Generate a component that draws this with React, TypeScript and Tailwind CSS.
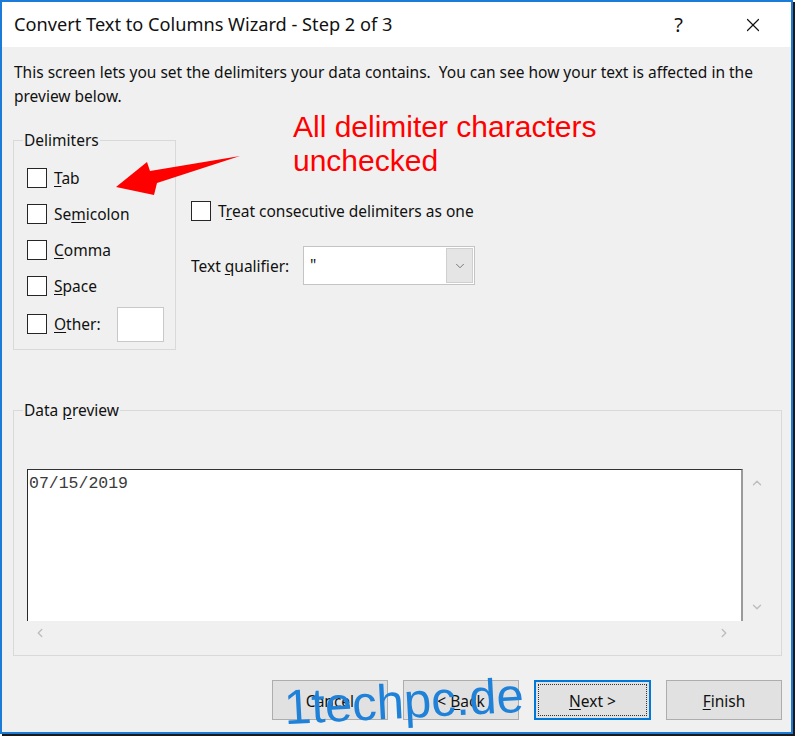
import { ChevronDown, ChevronLeft, ChevronRight, ChevronUp, X } from "lucide-react";

const ui = { fontFamily: '"Noto Sans", "Open Sans", sans-serif' };

function Box() {
  return <span className="h-[20px] w-[20px] shrink-0 border-[1.5px] border-[#262626] bg-white" />;
}

function Check({ pre, u, post }: { pre: string; u: string; post: string }) {
  return (
    <div className="flex h-[36px] items-center gap-[7px]">
      <Box />
      <span className="pt-[2px]">
        {pre}
        <span className="underline underline-offset-2">{u}</span>
        {post}
      </span>
    </div>
  );
}

function Btn({ pre, u, post, focus }: { pre: string; u: string; post: string; focus?: boolean }) {
  return (
    <div
      className={
        focus
          ? "flex h-[40px] w-[117px] items-center justify-center border-2 border-[#0078d7] bg-[#e1e1e1] p-[2px]"
          : "flex h-[40px] w-[116px] items-center justify-center border border-[#adadad] bg-[#e1e1e1]"
      }
    >
      <div
        className={
          focus
            ? "flex h-full w-full items-center justify-center border border-dotted border-[#333]"
            : "flex items-center justify-center"
        }
      >
        <span className="whitespace-pre pt-[3px]">
          {pre}
          {u && <span className="underline underline-offset-2">{u}</span>}
          {post}
        </span>
      </div>
    </div>
  );
}

export default function App() {
  return (
    <div className="h-[737px] w-[796px] bg-white" style={ui}>
      <div className="relative flex h-[734px] w-[793px] flex-col border-2 border-[#1c7bd6] text-[15.5px] text-[#111] shadow-[2px_2px_0_#1a1a1a]">
        {/* title bar */}
        <div className="flex h-[45px] shrink-0 items-center bg-white pl-[12px]">
          <span className="text-[18.2px] text-[#111]">Convert Text to Columns Wizard - Step 2 of 3</span>
          <span className="ml-auto mr-[59px] text-[20px]">?</span>
          <X className="mr-[27px] h-[22px] w-[22px]" strokeWidth={1.3} />
        </div>

        {/* body */}
        <div className="flex flex-1 flex-col bg-[#f0f0f0] pl-[11px] pr-[9px] pt-[13px]">
          <p className="whitespace-nowrap pl-[1px] leading-[24px]">
            This screen lets you set the delimiters your data contains.&nbsp; You can see how your text is affected in the
            <br />
            preview below.
          </p>

          <div className="mt-[22px] flex">
            <fieldset className="w-[163px] border border-[#d9d9d9] pb-[7px] pl-[9px]">
              <legend className="px-[1px] leading-[20px]">Delimiters</legend>
              <div className="mt-[10px] pl-[4px]">
                <Check pre="" u="T" post="ab" />
                <Check pre="Se" u="m" post="icolon" />
                <Check pre="" u="C" post="omma" />
                <Check pre="" u="S" post="pace" />
                <div className="mt-[2px] flex h-[36px] items-center">
                  <Box />
                  <span className="ml-[7px] pt-[2px]">
                    <span className="underline underline-offset-2">O</span>ther:
                  </span>
                  <span className="ml-[16px] h-[35px] w-[47px] border border-[#c8c8c8] bg-white" />
                </div>
              </div>
            </fieldset>

            <div className="ml-[15px] pt-[71px]">
              <div className="flex h-[20px] items-center gap-[7px]">
                <Box />
                <span className="pt-[2px]">
                  T<span className="underline underline-offset-2">r</span>eat consecutive delimiters as one
                </span>
              </div>
              <div className="mt-[25px] flex items-center">
                <span className="w-[112px] pt-[2px]">
                  Text <span className="underline underline-offset-2">q</span>ualifier:
                </span>
                <div className="flex h-[39px] w-[172px] items-center border border-[#c4c4c4] bg-white pl-[6px]">
                  <span>"</span>
                  <div className="ml-auto mr-[1px] flex h-[35px] w-[27px] items-center justify-center border border-[#cfcfcf] bg-[#e5e5e5]">
                    <ChevronDown className="h-[14px] w-[14px] text-[#555]" strokeWidth={1.3} />
                  </div>
                </div>
              </div>
            </div>
          </div>

          <fieldset className="mt-[50px] w-[769px] border border-[#d9d9d9] pb-[10px] pl-[9px]">
            <legend className="px-[1px] leading-[20px]">
              Data <span className="underline underline-offset-2">p</span>review
            </legend>
            <div className="mt-[49px] flex pl-[4px]">
              <div className="h-[152px] w-[716px] border-l border-r-2 border-t border-l-[#2a2a2a] border-r-[#9a9a9a] border-t-[#333] bg-white pl-[1px] pt-[1px]">
                <span className="text-[16.5px] text-[#3a3a3a]" style={{ fontFamily: '"Liberation Mono", monospace' }}>
                  07/15/2019
                </span>
              </div>
              <div className="flex w-[27px] flex-col items-center justify-between py-[7px]">
                <ChevronUp className="h-[14px] w-[14px] text-[#bdbdbd]" strokeWidth={2.4} />
                <ChevronDown className="h-[14px] w-[14px] text-[#bdbdbd]" strokeWidth={2.4} />
              </div>
            </div>
            <div className="flex h-[24px] w-[720px] items-center justify-between pl-[10px] pr-[12px]">
              <ChevronLeft className="h-[14px] w-[14px] text-[#bdbdbd]" strokeWidth={2.4} />
              <ChevronRight className="h-[14px] w-[14px] text-[#bdbdbd]" strokeWidth={2.4} />
            </div>
          </fieldset>

          <div className="mt-[24px] flex justify-end gap-[15px]">
            <Btn pre="Cancel" u="" post="" />
            <Btn pre="< " u="B" post="ack" />
            <Btn pre="" u="N" post="ext >" focus />
            <Btn pre="" u="F" post="inish" />
          </div>
        </div>

        {/* annotation */}
        <div
          className="absolute left-[291px] top-[108px] text-[30px] leading-[34px] text-[#ff0000]"
          style={{ fontFamily: '"Liberation Sans", Arial, sans-serif' }}
        >
          All delimiter characters
          <br />
          unchecked
        </div>
        <svg className="absolute left-[-2px] top-[-2px]" width="300" height="220" viewBox="0 0 300 220">
          <polygon points="116,187 147,162 150,171 240,156 157,183 154,195" fill="#ff0000" />
        </svg>

        {/* watermark */}
        <div
          className="absolute left-[282px] top-[671px] -rotate-3 text-[49px] leading-[56px] text-[#1f82d8]"
          style={{ fontFamily: '"Liberation Sans", Arial, sans-serif' }}
        >
          1techpc.de
        </div>
      </div>
    </div>
  );
}
